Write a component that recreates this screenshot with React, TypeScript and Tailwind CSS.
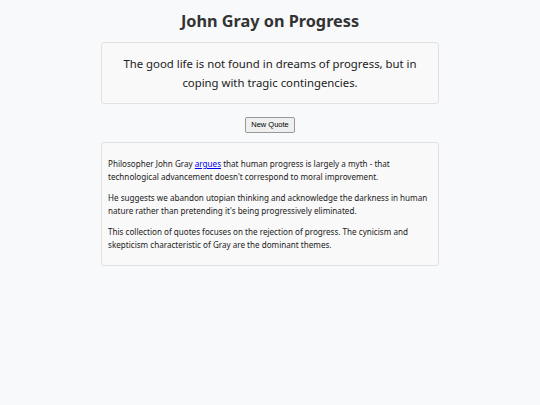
import React from 'react';

export default function App() {
  return (
    <div className="min-h-screen w-full bg-[#f8f9fa] text-[#222] font-['Noto_Sans',sans-serif]">
      <div className="w-[338px] mx-auto pt-[9px]">
        <h1 className="text-center text-[16.25px] font-bold text-[#333] leading-[24px]">John Gray on Progress</h1>

        <div className="mt-[9px] border border-[#e2e2e2] rounded-[3px] bg-[#f9f9f9] px-[12px] py-[11px]">
          <p className="text-center text-[11.35px] leading-[19px] text-[#222]">
            The good life is not found in dreams of progress, but in coping with tragic contingencies.
          </p>
        </div>

        <div className="flex justify-center mt-[13px]">
          <button className="h-[16px] px-[5px] text-[7.5px] font-['Liberation_Sans',Arial,sans-serif] text-black bg-[#efefef] border border-[#999] rounded-[2px]">
            New Quote
          </button>
        </div>

        <div className="mt-[9px] border border-[#e2e2e2] rounded-[3px] bg-[#f9f9f9] px-[6px] py-[6px] text-[8.1px] leading-[13px]">
          <p className="my-[8px]">
            Philosopher John Gray <a href="#" className="text-[#0000ee] underline">argues</a> that human progress is largely a myth - that technological advancement doesn't correspond to moral improvement.
          </p>
          <p className="my-[8px]">
            He suggests we abandon utopian thinking and acknowledge the darkness in human nature rather than pretending it's being progressively eliminated.
          </p>
          <p className="my-[8px]">
            This collection of quotes focuses on the rejection of progress. The cynicism and skepticism characteristic of Gray are the dominant themes.
          </p>
        </div>
      </div>
    </div>
  );
}
